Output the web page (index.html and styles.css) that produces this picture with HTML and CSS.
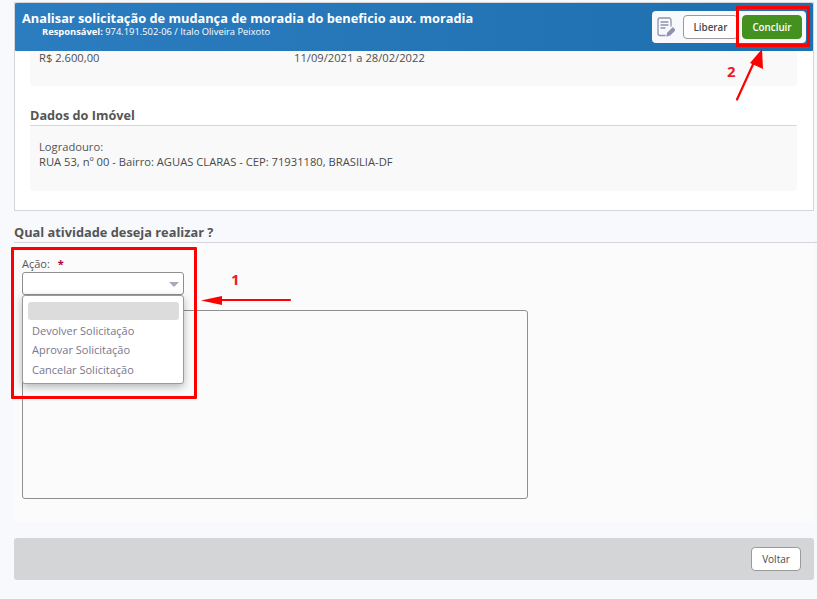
FILE: index.html
```html
<!DOCTYPE html>
<html lang="pt-BR">
<head>
<meta charset="utf-8">
<title>Analisar solicitação</title>
<link rel="stylesheet" href="styles.css">
</head>
<body>
<main class="page">
  <section class="card">
    <header class="head">
      <div class="head-text">
        <h1>Analisar solicitação de mudança de moradia do beneficio aux. moradia</h1>
        <p class="resp"><b>Responsável:</b> 974.191.502-06 / Italo Oliveira Peixoto</p>
      </div>
      <div class="tools">
        <svg class="note" width="18" height="20" viewBox="0 0 18 20" fill="none" stroke="#8f93ad" stroke-width="1.300" stroke-linecap="round" stroke-linejoin="round">
          <path d="M14 9V3a2 2 0 0 0-2-2H3a2 2 0 0 0-2 2v13.500a2 2 0 0 0 2 2h5"/>
          <path d="M4 5h7M4 8h7M4 11h4"/>
          <path d="M10 19l.8-3 5-5 2 2-5 5z" fill="#8f93ad"/>
        </svg>
        <button class="btn light">Liberar</button>
        <button class="btn green">Concluir</button>
      </div>
    </header>
    <div class="card-body">
      <div class="panel values">
        <span class="val">R$ 2.600,00</span>
        <span class="val">11/09/2021 a 28/02/2022</span>
      </div>
      <h2 class="sub">Dados do Imóvel</h2>
      <div class="panel addr">
        <p class="lbl">Logradouro:</p>
        <p>RUA 53, nº 00 - Bairro: AGUAS CLARAS - CEP: 71931180, BRASILIA-DF</p>
      </div>
    </div>
  </section>

  <h2 class="activity">Qual atividade deseja realizar ?</h2>
  <section class="form">
    <label class="field-label">Ação: <span class="req">*</span></label>
    <div class="select"><span class="caret"></span></div>
    <div class="menu">
      <div class="opt blank"></div>
      <div class="opt">Devolver Solicitação</div>
      <div class="opt">Aprovar Solicitação</div>
      <div class="opt">Cancelar Solicitação</div>
    </div>
    <div class="textarea"></div>
  </section>

  <footer class="foot">
    <button class="btn light back">Voltar</button>
  </footer>
</main>

<div class="mark mark-a"></div>
<div class="mark mark-b"></div>
<span class="num num-1">1</span>
<span class="num num-2">2</span>
<svg class="arrows" width="817" height="599" viewBox="0 0 817 599" fill="#f00" stroke="none">
  <path d="M290 300H222" stroke="#f00" stroke-width="2.200" stroke-linecap="round"/>
  <path d="M201 300.500l21-4.500v9z"/>
  <path d="M737 99.500L755 60" stroke="#f00" stroke-width="2.200" stroke-linecap="round"/>
  <path d="M762 49l1 20-13-6z"/>
</svg>
</body>
</html>
```
FILE: styles.css
```css
* { box-sizing: border-box; }
html, body { margin: 0; height: 599px; overflow: hidden; }
body {
  position: relative;
  background: #f7f9fd;
  color: #4a4a4a;
  font-family: "Open Sans", "Liberation Sans", sans-serif;
  font-size: 11px;
}
h1, h2, p { margin: 0; }
.page { padding: 2px 3px 0 14px; }

.card { height: 209px; background: #fff; border: 1px solid #d5d6da; overflow: hidden; }
.head {
  display: flex;
  justify-content: space-between;
  height: 48px;
  margin-left: -1px;
  margin-right: -1px;
  background: linear-gradient(90deg, #2b7dc0, #1e6fae);
  border-radius: 3px;
  color: #fff;
}
.head-text { padding: 7px 0 0 8px; }
.head h1 { font-size: 12.800px; line-height: 16px; font-weight: 700; }
.resp { font-size: 9.350px; line-height: 11px; padding-left: 20px; }
.tools {
  display: flex;
  align-items: center;
  gap: 4px;
  height: 32px;
  margin: 8px 8px 0 0;
  padding: 0 4px 0 5px;
  background: #f7f9fd;
  border-radius: 4px;
}
.note { margin-right: 4px; }
.btn {
  font-family: inherit;
  font-size: 9.800px;
  font-weight: 600;
  border-radius: 4px;
  height: 24px;
  padding: 0;
  cursor: pointer;
}
.light { width: 55px; background: #fff; border: 1px solid #9a9a9a; color: #4a4a4a; }
.green { width: 60px; background: #45911f; border: 1px solid #45911f; color: #fff; }

.card-body { padding: 0 16px 0 15px; }
.panel { background: #f9f9f9; border-radius: 3px; font-size: 11.200px; line-height: 15px; }
.values { display: flex; height: 35px; padding: 0 9px; color: #4f4f4f; line-height: 13px; }
.val:first-child { width: 255px; }
.sub {
  margin-top: 20px;
  height: 20px;
  font-size: 12.700px;
  line-height: 19px;
  font-weight: 700;
  color: #555;
  border-bottom: 1px solid #d5d6da;
}
.addr { height: 65px; padding: 13px 9px 0; }
.lbl { color: #555; }

.activity {
  height: 32px;
  padding-top: 13px;
  font-size: 12.800px;
  line-height: 16px;
  font-weight: 700;
  color: #555;
  border-bottom: 1px solid #d5d6da;
  margin-right: -3px;
}
.form { position: relative; height: 279px; padding: 13px 8px 0; background: #fbfbfb; border-radius: 0 0 3px 3px; }
.field-label { display: block; height: 16px; line-height: 15px; font-size: 11px; color: #555; }
.req { color: #b3003c; margin-left: 5px; font-weight: 700; }
.select {
  position: relative;
  width: 162px;
  height: 23px;
  background: #fff;
  border: 1px solid #8f8f8f;
  border-radius: 3px;
}
.caret {
  position: absolute;
  right: 4px;
  top: 9px;
  border-left: 5px solid transparent;
  border-right: 5px solid transparent;
  border-top: 5px solid #a7abb9;
}
.menu {
  position: absolute;
  z-index: 2;
  left: 8px;
  top: 52px;
  width: 162px;
  height: 89px;
  padding: 6px 4px 0 5px;
  background: #fff;
  border: 1px solid #9a9a9a;
  border-radius: 3px;
  box-shadow: 0 3px 8px rgba(0, 0, 0, .28);
}
.opt { height: 19.500px; line-height: 19.500px; padding-left: 4px; color: #77778d; font-size: 11px; }
.opt.blank { height: 18px; margin-bottom: .5px; background: #dcdcdc; border-radius: 3px; }
.textarea {
  width: 506px;
  height: 189px;
  margin-top: 15px;
  background: #fbfbfb;
  border: 1px solid #8f8f8f;
  border-radius: 3px;
}
.foot {
  display: flex;
  justify-content: flex-end;
  align-items: center;
  height: 42px;
  margin-top: 16px;
  padding-right: 13px;
  background: #d4d5d7;
  border-radius: 3px;
}
.back { width: 50px; height: 24px; font-weight: 400; font-size: 10px; }

.mark { position: absolute; border: 3px solid #f00; border-radius: 1px; z-index: 3; }
.mark-a { left: 11px; top: 247px; width: 186px; height: 152px; }
.mark-b { left: 736px; top: 6px; width: 74px; height: 41px; }
.num { position: absolute; z-index: 4; color: #f01c24; font-size: 15px; line-height: 18px; font-weight: 700; }
.num-1 { left: 231px; top: 270px; }
.num-2 { left: 727px; top: 62px; }
.arrows { position: absolute; left: 0; top: 0; z-index: 4; pointer-events: none; }
```
